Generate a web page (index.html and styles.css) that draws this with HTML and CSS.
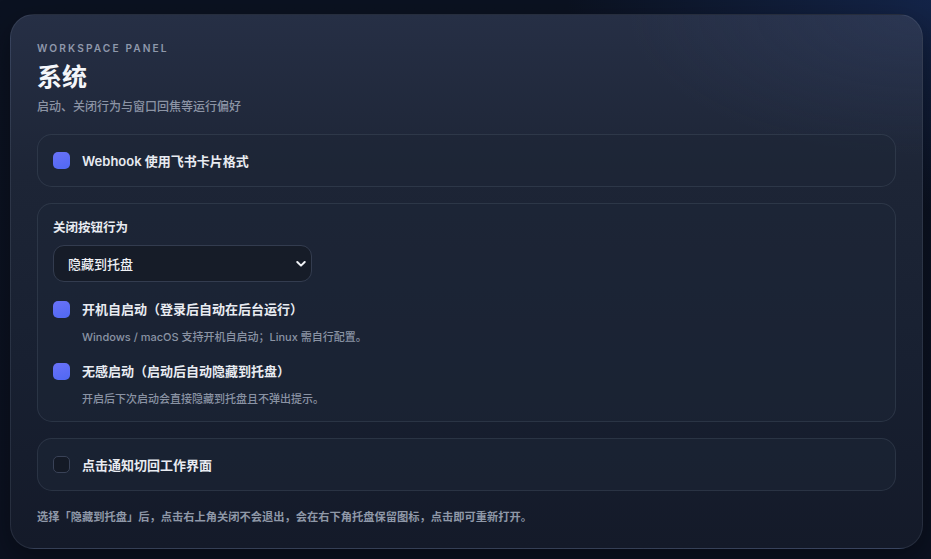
FILE: index.html
```html
<!DOCTYPE html>
<html lang="zh-CN">
<head>
<meta charset="utf-8">
<title>系统</title>
<link rel="stylesheet" href="styles.css">
</head>
<body>
<section class="panel">
  <div class="eyebrow">WORKSPACE PANEL</div>
  <h1 class="title">系统</h1>
  <p class="subtitle">启动、关闭行为与窗口回焦等运行偏好</p>

  <div class="card card-row">
    <label class="check">
      <span class="box on"></span>
      <span class="check-label">Webhook 使用飞书卡片格式</span>
    </label>
  </div>

  <div class="card card-group">
    <div class="field-label">关闭按钮行为</div>
    <div class="select">
      <span>隐藏到托盘</span>
      <svg class="chev" width="10" height="10" viewBox="0 0 10 10"><path d="M1.3 3 L5 6.6 L8.7 3" fill="none" stroke="#f1f3f7" stroke-width="2" stroke-linecap="round" stroke-linejoin="round"/></svg>
    </div>
    <label class="check mt-row">
      <span class="box on"></span>
      <span class="check-label">开机自启动（登录后自动在后台运行）</span>
    </label>
    <div class="hint">Windows / macOS 支持开机自启动；Linux 需自行配置。</div>
    <label class="check mt-row2">
      <span class="box on"></span>
      <span class="check-label">无感启动（启动后自动隐藏到托盘）</span>
    </label>
    <div class="hint">开启后下次启动会直接隐藏到托盘且不弹出提示。</div>
  </div>

  <div class="card card-row">
    <label class="check">
      <span class="box"></span>
      <span class="check-label">点击通知切回工作界面</span>
    </label>
  </div>

  <p class="footer">选择「隐藏到托盘」后，点击右上角关闭不会退出，会在右下角托盘保留图标，点击即可重新打开。</p>
</section>
</body>
</html>
```
FILE: styles.css
```css
* { box-sizing: border-box; }
html, body { height: 100%; }
body {
  margin: 0;
  padding: 14px 8px 10px 10px;
  font-family: "Inter", "Noto Sans CJK SC", "Noto Sans", sans-serif;
  background:
    radial-gradient(ellipse 520px 300px at 100% 0%, rgba(30, 58, 120, 0.45), transparent 70%),
    linear-gradient(180deg, #0b1221 0%, #0b1120 100%);
  color: #e5e7eb;
  overflow: hidden;
}
.panel {
  height: 535px;
  border-radius: 24px;
  border: 1px solid rgba(148, 163, 184, 0.14);
  background:
    radial-gradient(ellipse 420px 200px at 100% 0%, rgba(60, 80, 130, 0.22), transparent 70%),
    linear-gradient(180deg, #262f45 0%, #1d2536 30%, #182031 65%, #141a29 100%);
  padding: 26px 26px 0 26px;
  box-shadow: 0 10px 30px rgba(0, 0, 0, 0.35);
}
.eyebrow {
  font-size: 10.2px;
  line-height: 14px;
  letter-spacing: 2.1px;
  font-weight: 600;
  color: #8f98ab;
}
.title {
  margin: 6px 0 0;
  font-size: 25px;
  line-height: 32px;
  font-weight: 700;
  color: #f4f6fa;
}
.subtitle {
  margin: 5px 0 0;
  font-size: 12px;
  line-height: 18px;
  color: #8c94a5;
  font-weight: 500;
}
.card {
  border: 1px solid rgba(148, 163, 184, 0.14);
  border-radius: 15px;
  background: rgba(30, 38, 54, 0.55);
}
.card-row {
  margin-top: 18px;
  padding: 16px 15px 16px 15px;
  height: 53px;
  display: flex;
  align-items: center;
}
.card-row + .card-group, .card-group + .card-row { margin-top: 16px; }
.card-group {
  padding: 15px 15px 14px 15px;
  height: 219px;
}
.check {
  display: flex;
  align-items: center;
  gap: 12px;
  height: 20px;
}
.box {
  width: 17px;
  height: 17px;
  border-radius: 5px;
  flex: none;
  background: #141a26;
  border: 1px solid #394257;
}
.box.on {
  border: none;
  background: linear-gradient(160deg, #6a72f8 0%, #4f68f2 100%);
}
.check-label {
  font-size: 13px;
  line-height: 18px;
  font-weight: 600;
  color: #e8ebf1;
}
.field-label {
  font-size: 12.5px;
  line-height: 18px;
  font-weight: 600;
  color: #e8ebf1;
}
.select {
  margin-top: 8px;
  width: 259px;
  height: 37px;
  border-radius: 11px;
  border: 1px solid #333c4f;
  background: #161c28;
  display: flex;
  align-items: center;
  justify-content: space-between;
  padding: 0 5px 0 14px;
  font-size: 13px;
  font-weight: 500;
  color: #eef0f4;
}
.chev { display: block; }
.mt-row { margin-top: 17px; }
.mt-row2 { margin-top: 16px; }
.hint {
  margin-top: 10px;
  padding-left: 29px;
  font-size: 11px;
  line-height: 16px;
  color: #8a93a4;
  font-weight: 500;
}
.footer {
  margin: 18px 0 0;
  font-size: 11.25px;
  line-height: 16px;
  color: #8f98a8;
  font-weight: 600;
}
```
